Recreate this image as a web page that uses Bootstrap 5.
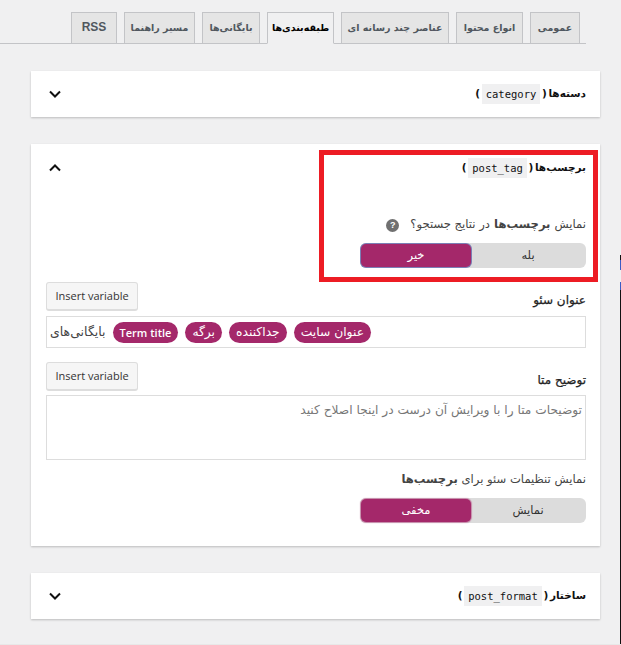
<!DOCTYPE html>
<html lang="fa" dir="rtl">
<head>
<meta charset="utf-8">
<title>Taxonomies</title>
<link href="https://cdn.jsdelivr.net/npm/bootstrap@5.3.0/dist/css/bootstrap.min.css" rel="stylesheet">
<style>
body{background:#f0f0f1;font-family:"DejaVu Sans",sans-serif;font-size:12px;color:#333;width:621px;height:645px;overflow:hidden;position:relative;}
.tabbar{margin:12px 35px 0 0;padding:0 6px 0 0;gap:7px;border-bottom:1px solid #c3c4c7;flex-wrap:nowrap;}
.tabbar .nav-link{height:32px;margin-bottom:-1px;padding:0;text-align:center;background:#e5e5e5;border:1px solid #c3c4c7;border-radius:0;color:#50575e;font-size:9.5px;font-weight:600;line-height:29px;white-space:nowrap;}
.tabbar .nav-link.active{background:#f0f0f1;border-bottom-color:#f0f0f1;color:#000;font-weight:700;}
.tabbar .rss{font-family:"Liberation Sans",sans-serif;font-size:12px;}
.t50{width:50px;}.t58{width:58px;}.t67{width:67px;}.t71{width:71px;}.t108{width:108px;}.t46{width:46px;}
.pane{margin:27px 21px 0 31px;}
.box{border:0;border-radius:0;background:#fff;box-shadow:0 1px 2px rgba(0,0,0,.22);margin-bottom:27px;}
.boxhead{height:46px;padding:0 14px 0 16px;}
.boxtitle{font-size:10.5px;font-weight:700;color:#111;word-spacing:-2px;}
.codeword{font-family:"DejaVu Sans Mono","Liberation Mono",monospace;font-size:10.5px;font-weight:400;background:#f0f0f1;color:#111;padding:4px 4px;margin:0;word-spacing:0;position:relative;top:1px;}
.chev{width:16px;height:16px;}
.openbody{padding:0 14px 0 15px;height:402px;}
.openhead{height:48px;padding-left:1px;}
.question{margin-top:23px;height:20px;font-size:11.6px;color:#444;}
.help{width:13px;height:13px;border-radius:50%;background:#707070;color:#fff;font-size:9px;font-weight:700;line-height:13px;text-align:center;margin-right:11px;font-family:"Liberation Sans",sans-serif;}
.toggle{display:flex;width:226px;height:25px;background:#dcdcdc;border-radius:6px;padding:1px;}
.toggle span{flex:1;text-align:center;line-height:23px;font-size:11.5px;color:#333;}
.toggle .chosen{flex:0 0 110px;background:#a4286a;color:#fff;border-radius:5px;box-shadow:0 0 0 1px #7b7fb5;height:23px;}
.toggle.plain .chosen{box-shadow:0 0 1px 1px #c58aa9;}
.tg1{margin-top:8px;}
.tg2{margin-top:9px;}
.rowlabel{height:29px;margin-top:14px;}
.fieldlabel{font-size:12px;font-weight:400;color:#222;margin-bottom:2px;-webkit-text-stroke:.25px #222;}
.insert{font-family:"Open Sans",sans-serif;font-size:11px;height:29px;width:92px;padding:0;line-height:26px;background:#f6f6f6;border:1px solid #ddd;border-bottom-width:2px;border-radius:3px;color:#333;white-space:nowrap;}
.insert:hover{background:#f6f6f6;border-color:#ddd;color:#333;}
.fieldbox{border:1px solid #ddd;border-radius:0;height:32px;margin-top:5px;padding:0 4px 0 3px;gap:7px;font-size:12.5px;color:#444;justify-content:flex-end;}
.chip{background:#a4286a;border-radius:11px;color:#fff;font-size:12.3px;font-weight:400;height:21px;line-height:21px;padding:0 7px;white-space:nowrap;}
.chip.latin{font-family:"Open Sans",sans-serif;font-weight:600;font-size:11px;}
.descbox{border:1px solid #ddd;border-radius:0;height:65px;margin-top:4px;padding:5px 3px;color:#777;font-size:12.2px;background:#fff;}
.note{font-size:11.6px;color:#444;margin-top:9px;height:20px;line-height:20px;}
.bottomline{position:absolute;left:0;right:0;bottom:0;height:1px;background:#e8e8e8;}
.callout{position:absolute;left:319px;top:150px;width:279px;height:132px;border:5px solid #ed1c24;pointer-events:none;}
.edgestrip{position:absolute;right:0;top:255px;bottom:0;width:1px;background:linear-gradient(#111 0 5px,#3b5bc4 5px 15px,#f0f0f1 15px 27px,#3b5bc4 27px 35px,#111 35px);}
</style>
</head>
<body>
  <ul class="nav tabbar">
    <li class="nav-item"><a class="nav-link t50" href="#">عمومی</a></li>
    <li class="nav-item"><a class="nav-link t67" href="#">انواع محتوا</a></li>
    <li class="nav-item"><a class="nav-link t108" href="#">عناصر چند رسانه ای</a></li>
    <li class="nav-item"><a class="nav-link active t67" href="#">طبقه‌بندی‌ها</a></li>
    <li class="nav-item"><a class="nav-link t58" href="#">بایگانی‌ها</a></li>
    <li class="nav-item"><a class="nav-link t71" href="#">مسیر راهنما</a></li>
    <li class="nav-item"><a class="nav-link rss t46" href="#">RSS</a></li>
  </ul>
  <div class="pane">
    <div class="card box">
      <div class="boxhead d-flex align-items-center justify-content-between">
        <span class="boxtitle">دسته‌ها ( <span class="codeword">category</span> )</span>
        <svg class="chev" viewBox="0 0 16 16" fill="none" stroke="#111" stroke-width="2"><path d="M3 5.5l5 5 5-5"/></svg>
      </div>
    </div>
    <div class="card box">
      <div class="openbody">
        <div class="openhead d-flex align-items-center justify-content-between">
          <span class="boxtitle">برچسب‌ها ( <span class="codeword">post_tag</span> )</span>
          <svg class="chev" viewBox="0 0 16 16" fill="none" stroke="#111" stroke-width="2"><path d="M3 10.5l5-5 5 5"/></svg>
        </div>
        <div class="question d-flex align-items-center">نمایش <b>&nbsp;برچسب‌ها&nbsp;</b> در نتایج جستجو؟<span class="help">?</span></div>
        <div class="toggle tg1"><span>بله</span><span class="chosen">خیر</span></div>
        <div class="rowlabel d-flex align-items-end justify-content-between">
          <span class="fieldlabel">عنوان سئو</span>
          <button class="btn insert" type="button">Insert variable</button>
        </div>
        <div class="fieldbox d-flex align-items-center">
          <span class="chip">عنوان سایت</span><span class="chip">جداکننده</span><span class="chip">برگه</span><span class="chip latin">Term title</span><span>بایگانی‌های</span>
        </div>
        <div class="rowlabel d-flex align-items-end justify-content-between">
          <span class="fieldlabel">توضیح متا</span>
          <button class="btn insert" type="button">Insert variable</button>
        </div>
        <div class="descbox">توضیحات متا را با ویرایش آن درست در اینجا اصلاح کنید</div>
        <div class="note">نمایش تنظیمات سئو برای <b>برچسب‌ها</b></div>
        <div class="toggle plain tg2"><span>نمایش</span><span class="chosen">مخفی</span></div>
      </div>
    </div>
    <div class="card box">
      <div class="boxhead d-flex align-items-center justify-content-between">
        <span class="boxtitle">ساختار ( <span class="codeword">post_format</span> )</span>
        <svg class="chev" viewBox="0 0 16 16" fill="none" stroke="#111" stroke-width="2"><path d="M3 5.5l5 5 5-5"/></svg>
      </div>
    </div>
  </div>
<div class="callout"></div>
<div class="edgestrip"></div>
<div class="bottomline"></div>
<script src="https://cdn.jsdelivr.net/npm/bootstrap@5.3.0/dist/js/bootstrap.bundle.min.js"></script>
</body>
</html>
